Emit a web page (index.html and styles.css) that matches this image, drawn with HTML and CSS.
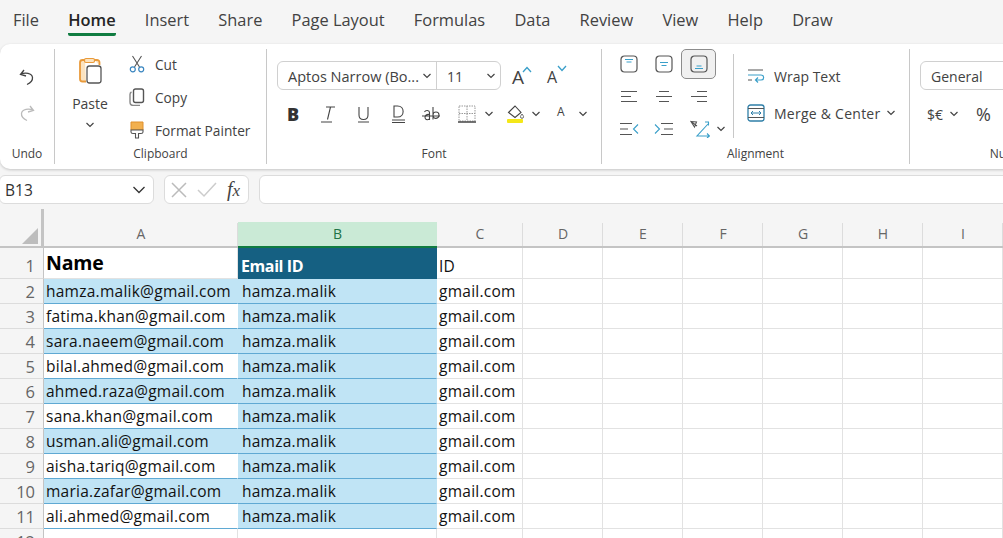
FILE: index.html
```html
<!DOCTYPE html>
<html lang="en">
<head>
    <meta charset="UTF-8">
    <title>Excel</title>
    <link rel="stylesheet" href="styles.css">
</head>
<body>
    <nav class="menu">
        <span>File</span>
        <span class="active">Home</span>
        <span>Insert</span>
        <span>Share</span>
        <span>Page Layout</span>
        <span>Formulas</span>
        <span>Data</span>
        <span>Review</span>
        <span>View</span>
        <span>Help</span>
        <span>Draw</span>
    </nav>

    <div class="ribbon">
        <section class="group undo">
            <div class="group_body undo_body">
                <svg width="20" height="20" viewBox="0 0 20 20" fill="none" stroke="#444" stroke-width="1.3"><path d="M7 3 3.500 7.500 9 9M3.500 7.500C8 5 15 6 15.500 10.500 15.800 13.500 13 16 10 17.500"/></svg>
                <svg width="20" height="20" viewBox="0 0 20 20" fill="none" stroke="#bbb" stroke-width="1.3"><path d="M13 3 16.500 7.500 11 9M16.500 7.500C12 5 5 6 4.500 10.500 4.200 13.500 7 16 10 17.500"/></svg>
            </div>
            <div class="group_label">Undo</div>
        </section>

        <section class="group clipboard">
            <div class="group_body clip_body">
                <div class="paste">
                    <svg width="28" height="28" viewBox="0 0 28 28" fill="none"><path d="M9 3H6.500A2.500 2.500 0 0 0 4 5.500V22a2.500 2.500 0 0 0 2.500 2.500H10M18 3h3A2.500 2.500 0 0 1 23.500 5.500V8" stroke="#e99a3a" stroke-width="1.800" fill="#fbe3c0"/><rect x="8.500" y="1.500" width="10" height="4" rx="1.500" fill="#fbe3c0" stroke="#e99a3a" stroke-width="1.200"/><rect x="11" y="9" width="14" height="17" rx="2.500" fill="#fff" stroke="#555" stroke-width="1.300"/></svg>
                    <span class="paste_text">Paste</span>
                    <svg class="chev" width="10" height="6" viewBox="0 0 10 6"><path d="M1.500 1 5 4.500 8.500 1"/></svg>
                </div>
                <div class="clip_list">
                    <div class="clip_row">
                        <svg width="16" height="18" viewBox="0 0 16 18" fill="none"><path d="M3.500 1 10.500 12M12.500 1 5.500 12" stroke="#555" stroke-width="1.100"/><circle cx="3.800" cy="14.300" r="2.500" stroke="#3a86c0" stroke-width="1.200"/><circle cx="12.200" cy="14.300" r="2.500" stroke="#3a86c0" stroke-width="1.200"/></svg>
                        <span>Cut</span>
                    </div>
                    <div class="clip_row">
                        <svg width="16" height="18" viewBox="0 0 16 18" fill="none" stroke="#555" stroke-width="1.400"><rect x="4.500" y="1" width="10" height="13.500" rx="2"/><path d="M2.500 4C1.500 4.500 1 5 1 6.500V14c0 2 1.500 3.500 3.500 3.500H11" stroke="#888"/></svg>
                        <span>Copy</span>
                    </div>
                    <div class="clip_row">
                        <svg width="16" height="18" viewBox="0 0 16 18" fill="none"><path d="M2 1h12v8H2z" fill="#f2b04f" stroke="#e0902c"/><path d="M2 9v2c0 1 .8 1.500 2 1.500h2.500V17h3v-4.500H12c1.200 0 2-.5 2-1.500V9z" fill="#fff" stroke="#555" stroke-width="1.100"/></svg>
                        <span>Format Painter</span>
                    </div>
                </div>
            </div>
            <div class="group_label">Clipboard</div>
        </section>

        <section class="group font">
            <div class="group_body font_body">
                <div class="font_top">
                    <div class="combo">
                        <div class="combo_name"><span>Aptos Narrow (Bo...</span> <svg class="chev" width="10" height="6" viewBox="0 0 10 6"><path d="M1.500 1 5 4.500 8.500 1"/></svg></div>
                        <div class="combo_size"><span>11</span> <svg class="chev" width="10" height="6" viewBox="0 0 10 6"><path d="M1.500 1 5 4.500 8.500 1"/></svg></div>
                    </div>
                    <div class="grow_a"><span>A</span><svg width="10" height="7" viewBox="0 0 10 7" fill="none" stroke="#3a9fc9" stroke-width="1.300"><path d="M1 6 5 1.500 9 6"/></svg></div>
                    <div class="shrink_a"><span>A</span><svg width="10" height="7" viewBox="0 0 10 7" fill="none" stroke="#3a9fc9" stroke-width="1.300"><path d="M1 1 5 5.500 9 1"/></svg></div>
                </div>
                <div class="font_row">
                    <span class="fmt_b">B</span>
                    <svg class="fmt_italic" width="18" height="20" viewBox="0 0 18 20" fill="none" stroke="#444" stroke-width="1.100"><path d="M6 3h9M10.500 3 7.500 15.500M1 18h11"/></svg>
                    <svg class="fmt_i" width="18" height="20" viewBox="0 0 18 20" fill="none" stroke="#444" stroke-width="1.100"><path d="M4 3v8c0 6 9 6 9 0V3M3 18h11"/></svg>
                    <svg class="fmt_i" width="18" height="20" viewBox="0 0 18 20" fill="none" stroke="#444" stroke-width="1.100"><path d="M4 2h3.500c7.500 0 7.500 11 0 11H4zM2 16h13M2 18.500h13"/></svg>
                    <svg class="fmt_strike" width="20" height="20" viewBox="0 0 20 20" fill="none" stroke="#444" stroke-width="1.100"><path d="M1 12h18M3.500 8c1-2 5-2 5 .5V16M8.500 10.500c-5-.8-6 5-2 5.300 1 0 2-.5 2-1.500M12 3v12.500M12 11c0-4 6-4 6 0s-6 5-6 0"/></svg>
                    <svg class="fmt_border" width="18" height="20" viewBox="0 0 18 20" fill="none" stroke="#999" stroke-width="1" stroke-dasharray="1.500 1"><path d="M1 2h16v15H1zM1 9.500h16M9 2v15"/><path d="M0 18h18" stroke="#444" stroke-width="1.300" stroke-dasharray="none"/></svg>
                    <svg class="chev fmt_chev" width="10" height="6" viewBox="0 0 10 6"><path d="M1.500 1 5 4.500 8.500 1"/></svg>
                    <svg class="fmt_fill" width="18" height="20" viewBox="0 0 18 20" fill="none"><path d="M1.500 8.500 8 2l6 6.500-6 5z" stroke="#444" stroke-width="1.100"/><path d="M15 10c-1 1.500-1.500 2-1.500 2.800a1.500 1.500 0 0 0 3 0c0-.8-.5-1.300-1.500-2.800z" stroke="#555" stroke-width=".9"/><rect x="0" y="15" width="16" height="4" rx="1" fill="#f4e718"/></svg>
                    <svg class="chev fill_chev" width="10" height="6" viewBox="0 0 10 6"><path d="M1.500 1 5 4.500 8.500 1"/></svg>
                    <span class="fmt_a">A</span>
                    <svg class="chev a_chev" width="10" height="6" viewBox="0 0 10 6"><path d="M1.500 1 5 4.500 8.500 1"/></svg>
                </div>
            </div>
            <div class="group_label">Font</div>
        </section>

        <section class="group alignment">
            <div class="group_body align_body">
                <div class="align_grid">
                    <div class="abtn"><svg width="18" height="18" viewBox="0 0 18 18" fill="none"><rect x="1" y="1" width="16" height="16" rx="3.500" stroke="#555" stroke-width="1.200"/><path d="M5 4.500h8M6.500 7h5" stroke="#3a9fc9" stroke-width="1.200"/></svg></div>
                    <div class="abtn"><svg width="18" height="18" viewBox="0 0 18 18" fill="none"><rect x="1" y="1" width="16" height="16" rx="3.500" stroke="#555" stroke-width="1.200"/><path d="M5 7.500h8M6.500 10.500h5" stroke="#3a9fc9" stroke-width="1.200"/></svg></div>
                    <div class="abtn abtn_on"><svg width="18" height="18" viewBox="0 0 18 18" fill="none"><rect x="1" y="1" width="16" height="16" rx="3.500" stroke="#555" stroke-width="1.200"/><path d="M6.500 11h5M5 13.500h8" stroke="#3a9fc9" stroke-width="1.200"/></svg></div>
                    <div class="abtn"><svg width="18" height="16" viewBox="0 0 18 16" fill="none" stroke="#555" stroke-width="1.100"><path d="M1 2.500h16M1 7.500h10M1 12.500h16"/></svg></div>
                    <div class="abtn"><svg width="18" height="16" viewBox="0 0 18 16" fill="none" stroke="#555" stroke-width="1.100"><path d="M4 2.500h10M1 7.500h16M4 12.500h10"/></svg></div>
                    <div class="abtn"><svg width="18" height="16" viewBox="0 0 18 16" fill="none" stroke="#555" stroke-width="1.100"><path d="M7 2.500h10M1 7.500h16M7 12.500h10"/></svg></div>
                    <div class="abtn"><svg width="20" height="14" viewBox="0 0 20 14" fill="none" stroke-width="1.100"><path d="M1 1.500h12M1 7h8M1 12.500h12" stroke="#555"/><path d="M19 2.500 14.500 7l4.500 4.500" stroke="#3a9fc9"/></svg></div>
                    <div class="abtn"><svg width="20" height="14" viewBox="0 0 20 14" fill="none" stroke-width="1.100"><path d="M1 2.500 5.500 7 1 11.500" stroke="#3a9fc9"/><path d="M7 1.500h12M10 7h9M7 12.500h12" stroke="#555"/></svg></div>
                    <div class="abtn orient">
                        <svg width="20" height="18" viewBox="0 0 20 18" fill="none" stroke-width="1.100"><path d="M1 1.500 6.500 2 4.500 7zM1 1.500 7 6" stroke="#555"/><path d="M18 4 7 16h12M15 2h3.500v3.500M17 13.500l2.500 2.500-2.500 2" stroke="#3a9fc9"/></svg>
                        <svg class="chev" width="10" height="6" viewBox="0 0 10 6"><path d="M1.500 1 5 4.500 8.500 1"/></svg>
                    </div>
                </div>
                <div class="wrap_col">
                    <div class="wrap_row">
                        <svg width="18" height="16" viewBox="0 0 18 16" fill="none" stroke-width="1.200"><path d="M1 2h15M1 12h4" stroke="#555"/><path d="M1 7h13c3.500 0 3.500 5 0 5H9M11 9.500 8.500 12l2.500 2.500" stroke="#3a9fc9"/></svg>
                        <span>Wrap Text</span>
                    </div>
                    <div class="wrap_row">
                        <svg width="18" height="18" viewBox="0 0 18 18" fill="none"><rect x="1" y="1" width="16" height="16" rx="2.500" stroke="#2f7fa8" stroke-width="1.300"/><path d="M1 4.500h16M1 13.500h16" stroke="#555"/><path d="M4 9h10M6 7 4 9l2 2M12 7l2 2-2 2" stroke="#2f7fa8"/></svg>
                        <span class="merge_text">Merge &amp; Center</span>
                        <svg class="chev" width="10" height="6" viewBox="0 0 10 6"><path d="M1.500 1 5 4.500 8.500 1"/></svg>
                    </div>
                </div>
            </div>
            <div class="group_label">Alignment</div>
        </section>

        <section class="group number">
            <div class="group_body num_body">
                <div class="num_combo">General</div>
                <div class="num_row">
                    <span>$€</span>
                    <svg class="chev" width="10" height="6" viewBox="0 0 10 6"><path d="M1.500 1 5 4.500 8.500 1"/></svg>
                    <span class="num_pct">%</span>
                </div>
            </div>
            <div class="group_label">Number</div>
        </section>
    </div>

    <div class="fbar">
        <div class="namebox">B13 <svg width="14" height="8" viewBox="0 0 14 8" fill="none" stroke="#333" stroke-width="1.300"><path d="M1.500 1 7 6.500 12.500 1"/></svg></div>
        <div class="fbtns">
            <svg width="18" height="18" viewBox="0 0 18 18" fill="none" stroke="#bbb" stroke-width="1.500"><path d="M2 2l14 14M16 2 2 16"/></svg>
            <svg width="22" height="18" viewBox="0 0 22 18" fill="none" stroke="#ccc" stroke-width="1.500"><path d="M2 9l6 6L20 2"/></svg>
            <span class="fx">f<i>x</i></span>
        </div>
        <div class="finput"></div>
    </div>

    <div class="sheet">
        <table>
            <colgroup>
                <col class="c_head"><col class="c_a"><col class="c_b"><col class="c_c">
                <col class="c_n"><col class="c_n"><col class="c_n"><col class="c_n"><col class="c_n"><col class="c_n">
            </colgroup>
            <tr class="heads">
                <th class="corner"><span class="tri"></span></th>
                <th>A</th><th class="sel">B</th><th>C</th><th>D</th><th>E</th><th>F</th><th>G</th><th>H</th><th>I</th>
            </tr>
            <tr class="first">
                <th>1</th><td class="name">Name</td><td class="title">Email ID</td><td>ID</td><td></td><td></td><td></td><td></td><td></td><td></td>
            </tr>
            <tr>
                <th>2</th><td class="band">hamza.malik@gmail.com</td><td class="band">hamza.malik</td><td>gmail.com</td><td></td><td></td><td></td><td></td><td></td><td></td>
            </tr>
            <tr>
                <th>3</th><td class="line">fatima.khan@gmail.com</td><td class="band">hamza.malik</td><td>gmail.com</td><td></td><td></td><td></td><td></td><td></td><td></td>
            </tr>
            <tr>
                <th>4</th><td class="band">sara.naeem@gmail.com</td><td class="band">hamza.malik</td><td>gmail.com</td><td></td><td></td><td></td><td></td><td></td><td></td>
            </tr>
            <tr>
                <th>5</th><td class="line">bilal.ahmed@gmail.com</td><td class="band">hamza.malik</td><td>gmail.com</td><td></td><td></td><td></td><td></td><td></td><td></td>
            </tr>
            <tr>
                <th>6</th><td class="band">ahmed.raza@gmail.com</td><td class="band">hamza.malik</td><td>gmail.com</td><td></td><td></td><td></td><td></td><td></td><td></td>
            </tr>
            <tr>
                <th>7</th><td class="line">sana.khan@gmail.com</td><td class="band">hamza.malik</td><td>gmail.com</td><td></td><td></td><td></td><td></td><td></td><td></td>
            </tr>
            <tr>
                <th>8</th><td class="band">usman.ali@gmail.com</td><td class="band">hamza.malik</td><td>gmail.com</td><td></td><td></td><td></td><td></td><td></td><td></td>
            </tr>
            <tr>
                <th>9</th><td class="line">aisha.tariq@gmail.com</td><td class="band">hamza.malik</td><td>gmail.com</td><td></td><td></td><td></td><td></td><td></td><td></td>
            </tr>
            <tr>
                <th>10</th><td class="band">maria.zafar@gmail.com</td><td class="band">hamza.malik</td><td>gmail.com</td><td></td><td></td><td></td><td></td><td></td><td></td>
            </tr>
            <tr>
                <th>11</th><td class="line">ali.ahmed@gmail.com</td><td class="band">hamza.malik</td><td>gmail.com</td><td></td><td></td><td></td><td></td><td></td><td></td>
            </tr>
            <tr>
                <th>12</th><td></td><td></td><td></td><td></td><td></td><td></td><td></td><td></td><td></td>
            </tr>
        </table>
    </div>
</body>
</html>
```

FILE: styles.css
```css
html, body {
    margin: 0;
    height: 100%;
}
body {
    width: 1003px;
    height: 538px;
    overflow: hidden;
    background-color: #f5f5f5;
    font-family: "Open Sans", "Noto Sans", sans-serif;
    color: #424242;
}
svg {
    display: block;
    flex: none;
}
.chev {
    fill: none;
    stroke: #444;
    stroke-width: 1.200;
}

/* menu */
.menu {
    height: 44px;
    display: flex;
    gap: 29.250px;
    padding: 8px 0 0 13px;
    box-sizing: border-box;
    font-size: 16.400px;
    line-height: 24px;
}
.menu .active {
    height: 28px;
    box-sizing: border-box;
    border-bottom: 3px solid #107c41;
    border-radius: 0 0 2px 2px;
    font-weight: 600;
    color: #242424;
}

/* ribbon */
.ribbon {
    height: 125px;
    width: 1120px;
    display: flex;
    background-color: #fff;
    border-radius: 10px 0 0 10px;
    box-shadow: 0 1px 3px #0003;
    overflow: hidden;
    font-size: 14px;
}
.group {
    flex: none;
    display: flex;
    flex-direction: column;
    margin: 5px 0;
    box-sizing: border-box;
    border-right: 1px solid #c8c8c8;
}
.group_body {
    height: 96px;
    box-sizing: border-box;
}
.group_label {
    height: 18px;
    line-height: 18px;
    font-size: 12px;
    text-align: center;
}
.undo { width: 55px; }
.clipboard { width: 212px; }
.font { width: 335px; }
.alignment { width: 308px; }
.number { width: 206px; border-right: 0; }

.undo_body {
    display: flex;
    flex-direction: column;
    align-items: center;
    gap: 16px;
    padding-top: 18px;
}
.clip_body {
    display: flex;
    padding: 8px 0 0 12px;
}
.paste {
    width: 46px;
    display: flex;
    flex-direction: column;
    align-items: center;
}
.paste_text {
    line-height: 20px;
    margin-top: 9px;
}
.paste .chev { margin-top: 8px; }
.clip_list {
    margin-left: 16px;
    display: flex;
    flex-direction: column;
    gap: 11px;
    margin-top: -4px;
}
.clip_row {
    height: 22px;
    display: flex;
    align-items: center;
    gap: 10px;
    font-size: 13.700px;
}

.font_body { padding: 12px 0 0 10px; }
.font_top {
    display: flex;
    align-items: center;
}
.combo {
    width: 224px;
    height: 29px;
    box-sizing: border-box;
    display: flex;
    border: 1px solid #d0d0d0;
    border-radius: 6px;
}
.combo_name {
    width: 159px;
    box-sizing: border-box;
    padding: 0 4px 0 10px;
    display: flex;
    align-items: center;
    justify-content: space-between;
    border-right: 1px solid #d0d0d0;
    font-size: 14.500px;
}
.combo_name span, .combo_size span {
    margin-top: 2px;
}
.combo_size {
    flex: 1;
    padding: 0 4px 0 10px;
    display: flex;
    align-items: center;
    justify-content: space-between;
}
.grow_a, .shrink_a {
    display: flex;
    align-items: flex-start;
    margin-top: 3px;
}
.grow_a {
    margin-left: 11px;
    font-size: 19px;
    line-height: 26px;
}
.grow_a svg { margin-top: 2px; margin-left: -2px; }
.shrink_a {
    margin-left: 15px;
    font-size: 16px;
    line-height: 26px;
}
.shrink_a svg { margin-top: 1px; }
.font_row {
    display: flex;
    align-items: center;
    margin-top: 8px;
    height: 32px;
    padding-left: 9px;
}
.fmt_b {
    width: 14px;
    font-size: 18px;
    font-weight: 800;
    text-align: center;
    color: #333;
}
.fmt_italic { margin-left: 20px; }
.fmt_i { margin-left: 17px; }
.fmt_strike { margin-left: 13px; }
.fmt_border { margin-left: 17px; }
.fmt_chev { margin-left: 8px; }
.fmt_fill { margin-left: 13px; }
.fill_chev { margin-left: 6px; }
.fmt_a {
    margin-left: 16px;
    margin-top: -5px;
    font-size: 12px;
}
.a_chev { margin-left: 13px; }

.align_body {
    display: flex;
    padding-left: 9px;
}
.align_grid {
    width: 122px;
    height: 95px;
    display: grid;
    grid-template-columns: 35px 35px 35px;
    grid-template-rows: 30px 35px 30px;
}
.abtn {
    display: flex;
    align-items: center;
    justify-content: center;
}
.abtn_on {
    background-color: #f0f0f0;
    border: 1px solid #8c8c8c;
    border-radius: 5px;
}
.orient {
    gap: 6px;
    width: 46px;
    padding-left: 8px;
    box-sizing: border-box;
}
.wrap_col {
    display: flex;
    flex-direction: column;
    gap: 15px;
    height: 84px;
    box-sizing: border-box;
    margin-top: 5px;
    border-left: 1px solid #c8c8c8;
    padding: 11px 0 0 13px;
}
.wrap_row {
    height: 22px;
    display: flex;
    align-items: center;
    gap: 9px;
}
.merge_text { letter-spacing: .25px; }
.wrap_row .chev { margin-left: -3px; }

.num_body { padding: 12px 0 0 10px; }
.num_combo {
    width: 200px;
    height: 29px;
    line-height: 30px;
    box-sizing: border-box;
    border: 1px solid #d0d0d0;
    border-radius: 6px;
    padding-left: 10px;
}
.num_row {
    margin-top: 8px;
    height: 32px;
    display: flex;
    align-items: center;
    gap: 6px;
    padding-left: 7px;
}
.num_pct {
    margin-left: 11px;
    font-size: 18px;
}

/* formula bar */
.fbar {
    height: 40px;
    display: flex;
    align-items: center;
    padding-top: 1px;
    box-sizing: border-box;
    margin-left: -1px;
    width: 1040px;
}
.namebox, .fbtns, .finput {
    height: 29px;
    box-sizing: border-box;
    background-color: #fff;
    border: 1px solid #dcdcdc;
    border-radius: 6px;
}
.namebox {
    width: 155px;
    display: flex;
    align-items: center;
    justify-content: space-between;
    padding: 0 7px 0 5px;
    font-size: 15.500px;
    color: #333;
}
.fbtns {
    width: 85px;
    margin-left: 10px;
    display: flex;
    align-items: center;
    gap: 8px;
    padding-left: 5px;
}
.fx {
    font-family: "Liberation Serif", serif;
    font-style: italic;
    font-size: 20px;
    margin-left: 1px;
    color: #444;
}
.fx i { font-size: 17px; }
.finput {
    flex: 1;
    margin-left: 10px;
}

/* sheet */
.sheet {
    height: 330px;
    overflow: hidden;
    background-color: #fff;
}
table {
    table-layout: fixed;
    border-collapse: separate;
    border-spacing: 0;
    width: 1003px;
    font-size: 15.500px;
    letter-spacing: .25px;
    color: #111;
}
.c_head { width: 44px; }
.c_a { width: 194px; }
.c_b { width: 199px; }
.c_c { width: 86px; }
.c_n { width: 80px; }
th {
    padding: 0;
    background-color: #f5f5f5;
    font-weight: 400;
    color: #666;
    border-bottom: 1px solid #dcdcdc;
    letter-spacing: 0;
}
.heads th {
    height: 23px;
    padding-top: 13px;
    font-size: 14px;
    border-bottom: 2px solid #c4c4c4;
    box-sizing: content-box;
    vertical-align: bottom;
    line-height: 24px;
    background-image: linear-gradient(#dcdcdc, #dcdcdc);
    background-repeat: no-repeat;
    background-position: right bottom;
    background-size: 1px 23px;
}
.heads th.sel {
    color: #217346;
    background-image: linear-gradient(#f5f5f5 13px, #caead6 13px);
    background-size: 100% 100%;
    border-bottom-color: #107c41;
}
tr th:first-child {
    text-align: right;
    padding-right: 8px;
    font-size: 16.500px;
    border-right: 1px solid #c4c4c4;
}
.heads th.corner {
    position: relative;
    background-image: none;
    padding: 0;
    border-right: 3px solid #c4c4c4;
}
.tri {
    position: absolute;
    right: 3px;
    bottom: 2px;
    width: 0;
    height: 0;
    border-left: 16px solid transparent;
    border-bottom: 16px solid #bdbdbd;
}
td {
    height: 24px;
    padding: 0 2px;
    box-sizing: content-box;
    border-right: 1px solid #e2e2e2;
    border-bottom: 1px solid #e2e2e2;
    white-space: nowrap;
    line-height: 24px;
}
.first td, .first th {
    height: 30px;
    vertical-align: bottom;
}
.first th {
    padding-bottom: 1px;
    height: 29px;
}
.first td.name {
    font-size: 19.500px;
    line-height: 30px;
    font-weight: 700;
    letter-spacing: -.2px;
    color: #000;
    padding: 0 0 0 2px;
    vertical-align: top;
}
.first td.title {
    background-color: #156082;
    color: #fff;
    font-size: 16px;
    font-weight: 700;
    letter-spacing: -.4px;
    padding-left: 3px;
    border-color: #156082;
}
.band, .line {
    padding-left: 2px;
    border-bottom-color: #5fa9d3;
}
td.band + td.band, td.line + td.band {
    padding-left: 4px;
}
.band {
    background-color: #c0e4f5;
    border-right-color: #c0e4f5;
}
.line {
    border-right-color: #fff;
}
```
